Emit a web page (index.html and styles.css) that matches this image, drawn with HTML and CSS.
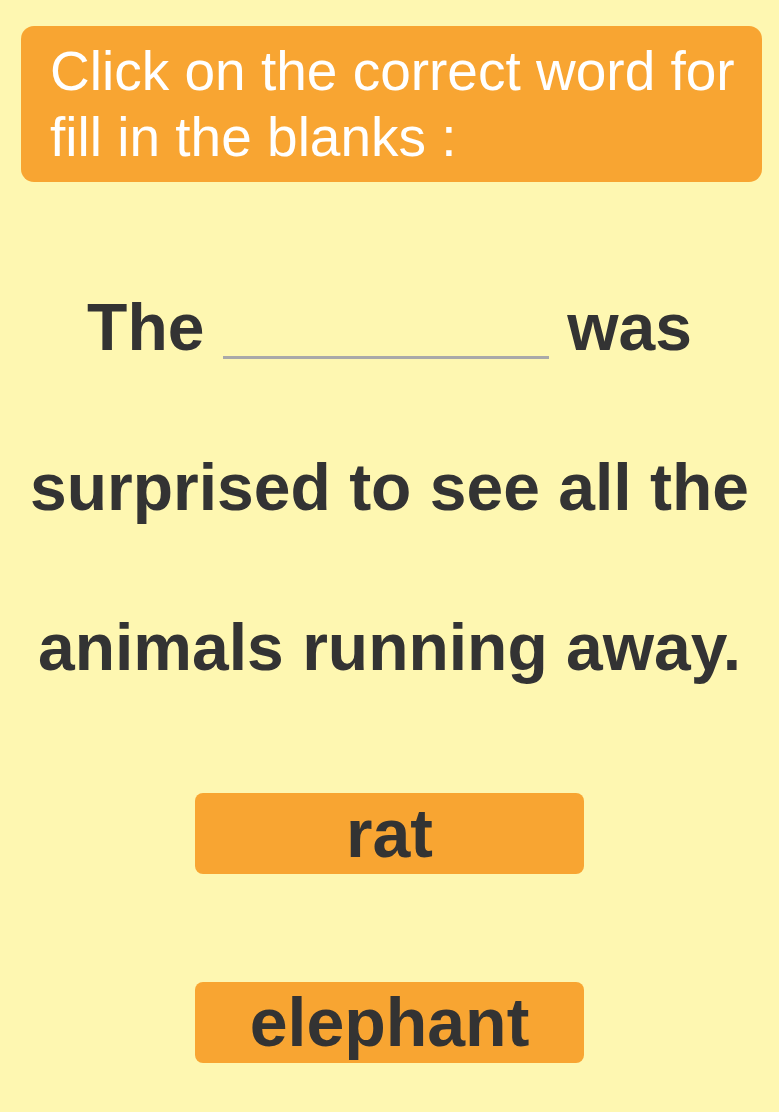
FILE: index.html
```html
<!DOCTYPE html>
<html lang="en">
<head>
<meta charset="utf-8">
<title>Fill in the blanks</title>
<link rel="stylesheet" href="styles.css">
</head>
<body>
  <div class="page">
    <div class="prompt">Click on the correct word for fill in the blanks :</div>
    <p class="sentence">The <span class="blank"></span> was surprised to see all the animals running away.</p>
    <div class="options">
      <button class="option">rat</button>
      <button class="option">elephant</button>
    </div>
  </div>
</body>
</html>
```

FILE: styles.css
```css
html, body {
  margin: 0;
  padding: 0;
  background: #fef7b1;
}
.page {
  width: 779px;
  min-height: 1112px;
  background: #fef7b1;
  font-family: "Liberation Sans", Arial, sans-serif;
  padding-top: 26px;
  box-sizing: border-box;
}
.prompt {
  margin: 0 17px 0 21px;
  background: #f8a532;
  border-radius: 13px;
  color: #ffffff;
  font-size: 55px;
  line-height: 66px;
  padding: 12px 14px 12px 29px;
}
.sentence {
  margin: 65px 0 0 0;
  text-align: center;
  font-weight: bold;
  font-size: 66px;
  line-height: 160px;
  color: #333333;
}
.blank {
  display: inline-block;
  width: 326px;
  height: 0;
  border-bottom: 3px solid #a9a9a9;
  vertical-align: -9px;
}
.options {
  display: flex;
  flex-direction: column;
  align-items: center;
  gap: 108px;
  margin-top: 66px;
}
.option {
  width: 389px;
  height: 81px;
  border: none;
  border-radius: 8px;
  background: #f8a532;
  color: #333333;
  font-family: "Liberation Sans", Arial, sans-serif;
  font-weight: bold;
  font-size: 68px;
  line-height: 81px;
  padding: 0;
  cursor: pointer;
}
```
